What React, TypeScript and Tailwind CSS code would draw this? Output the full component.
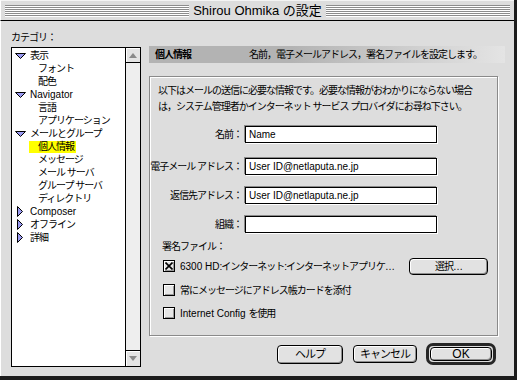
const font = "font-['Liberation_Sans','Noto_Sans_CJK_JP',sans-serif]";

type Item = { t: string; lvl: number; open?: boolean; sel?: boolean; latin?: boolean };

const items: Item[] = [
  { t: "表示", lvl: 0, open: true },
  { t: "フォント", lvl: 1 },
  { t: "配色", lvl: 1 },
  { t: "Navigator", lvl: 0, open: true, latin: true },
  { t: "言語", lvl: 1 },
  { t: "アプリケーション", lvl: 1 },
  { t: "メールとグループ", lvl: 0, open: true },
  { t: "個人情報", lvl: 1, sel: true },
  { t: "メッセージ", lvl: 1 },
  { t: "メール サーバ", lvl: 1 },
  { t: "グループ サーバ", lvl: 1 },
  { t: "ディレクトリ", lvl: 1 },
  { t: "Composer", lvl: 0, open: false, latin: true },
  { t: "オフライン", lvl: 0, open: false },
  { t: "詳細", lvl: 0, open: false },
];

function Stripes() {
  return (
    <div className="flex-1 h-[12px] bg-[repeating-linear-gradient(to_bottom,#8c8c8c_0px,#8c8c8c_1px,#ffffff_1px,#ffffff_2px)]" />
  );
}

function Twisty({ open }: { open: boolean }) {
  return (
    <svg width="11" height="11" viewBox="0 0 11 11" className="shrink-0">
      {open ? (
        <polygon points="0.5,3.5 10.5,3.5 5.5,8.5" fill="#9a9af2" stroke="#000" strokeWidth="1" />
      ) : (
        <polygon points="2.5,0.5 7.5,5.5 2.5,10.5" fill="#9a9af2" stroke="#000" strokeWidth="1" />
      )}
    </svg>
  );
}

function TreeRow({ item }: { item: Item }) {
  if (item.lvl === 0) {
    return (
      <div className="h-[13px] flex items-center pl-[3px] whitespace-nowrap">
        <Twisty open={!!item.open} />
        <span className={`ml-[4px] ${item.latin ? "tracking-normal" : ""}`}>{item.t}</span>
      </div>
    );
  }
  return (
    <div className="h-[13px] flex items-center pl-[17px] whitespace-nowrap">
      <span className={`h-[12px] leading-[12px] pl-[9px] pr-[2px] ${item.sel ? "bg-[#ffff00]" : ""}`}>{item.t}</span>
    </div>
  );
}

function Field({ label, value, mt }: { label: string; value: string; mt: string }) {
  return (
    <div className={`flex items-center ${mt}`}>
      <div className="w-[92px] text-right whitespace-nowrap">{label}</div>
      <div className="ml-[3px] w-[192px] h-[17px] border border-black bg-white shadow-[-1px_-1px_0_#8a8a8a,1px_1px_0_#ffffff] flex items-center pl-[3px] text-[10px] tracking-normal">
        {value}
      </div>
    </div>
  );
}

function CheckBox({ checked }: { checked?: boolean }) {
  return (
    <div className="w-[12px] h-[12px] shrink-0 border border-black bg-[#e6e6e6] shadow-[inset_1px_1px_0_#ffffff,inset_-1px_-1px_0_#999999] flex items-center justify-center">
      {checked && (
        <svg width="8" height="8" viewBox="0 0 8 8">
          <path d="M0.5 0.5 L7.5 7.5 M7.5 0.5 L0.5 7.5" stroke="#000" strokeWidth="1.6" />
        </svg>
      )}
    </div>
  );
}

function Button({ children, className }: { children: React.ReactNode; className: string }) {
  return (
    <div
      className={`rounded-[4px] border border-black bg-[#e2e2e2] shadow-[inset_1px_1px_0_#ffffff,inset_-1px_-1px_0_#8e8e8e] flex items-center justify-center whitespace-nowrap ${className}`}
    >
      {children}
    </div>
  );
}

export default function App() {
  return (
    <div className={`w-[517px] h-[380px] bg-[#dddddd] border-r-[3px] border-b-[4px] border-[#1c1c1c] flex flex-col overflow-hidden text-black text-[10px] tracking-[-1px] ${font}`}>
      <div className="h-[21px] shrink-0 border-b border-black border-l border-l-white border-t border-t-[#f4f4f4] flex items-center pl-[4px] pr-[4px]">
        <Stripes />
        <div className="px-[4px] text-[13px] tracking-normal leading-[16px] whitespace-nowrap">Shirou Ohmika の設定</div>
        <Stripes />
      </div>

      <div className="flex flex-1 border-l border-l-white">
        <div className="pl-[10px] w-[140px] shrink-0 flex flex-col">
          <div className="mt-[11px] h-[12px] leading-[12px] whitespace-nowrap">カテゴリ：</div>
          <div className="mt-[3px] w-[130px] h-[320px] border border-black bg-white flex">
            <div className="flex-1 pt-[1px]">
              {items.map((it) => (
                <TreeRow key={it.t} item={it} />
              ))}
            </div>
            <div className="w-[15px] border-l border-black bg-[#eeeeee] flex flex-col justify-between">
              <div className="h-[15px] border-b border-black bg-[#e4e4e4] shadow-[inset_1px_1px_0_#ffffff] flex items-center justify-center">
                <svg width="8" height="5" viewBox="0 0 8 5"><polygon points="0,5 8,5 4,0" fill="#8a8a8a" /></svg>
              </div>
              <div className="h-[16px] border-t border-black bg-[#e4e4e4] shadow-[inset_1px_1px_0_#ffffff] flex items-center justify-center">
                <svg width="8" height="5" viewBox="0 0 8 5"><polygon points="0,0 8,0 4,5" fill="#8a8a8a" /></svg>
              </div>
            </div>
          </div>
        </div>

        <div className="ml-[8px] flex flex-col">
          <div className="mt-[25px] w-[356px] h-[17px] flex items-center bg-[linear-gradient(to_right,#b3b3b3_0%,#b3b3b3_40%,#e4e4e4_100%)] whitespace-nowrap">
            <span className="ml-[6px] font-bold">個人情報</span>
            <span className="ml-[58px]">名前，電子メールアドレス，署名ファイルを設定します。</span>
          </div>

          <div className="mt-[13px] w-[349px] h-[260px] border border-[#8a8a8a] shadow-[inset_1px_1px_0_#ffffff,1px_1px_0_#ffffff] flex flex-col">
            <div className="pt-[6px] pl-[8px] leading-[16px] whitespace-nowrap">
              <div>以下はメールの送信に必要な情報です。必要な情報がおわかりにならない場合</div>
              <div>は，システム管理者かインターネット サービス プロバイダにお尋ね下さい。</div>
            </div>
            <Field label="名前：" value="Name" mt="mt-[11px]" />
            <Field label="電子メール アドレス：" value="User ID@netlaputa.ne.jp" mt="mt-[15px]" />
            <Field label="返信先アドレス：" value="User ID@netlaputa.ne.jp" mt="mt-[12px]" />
            <Field label="組織：" value="" mt="mt-[12px]" />

            <div className="mt-[8px] pl-[12px] h-[12px] leading-[12px]">署名ファイル：</div>
            <div className="mt-[4px] pl-[13px] h-[18px] flex items-center">
              <CheckBox checked />
              <span className="ml-[5px] w-[224px] whitespace-nowrap overflow-hidden">
                <span className="tracking-normal">6300 HD</span>:インターネット:インターネットアプリケ…
              </span>
              <Button className="ml-[5px] w-[79px] h-[17px]">選択…</Button>
            </div>
            <div className="mt-[9px] pl-[13px] h-[12px] flex items-center">
              <CheckBox />
              <span className="ml-[5px] whitespace-nowrap">常にメッセージにアドレス帳カードを添付</span>
            </div>
            <div className="mt-[11px] pl-[13px] h-[12px] flex items-center">
              <CheckBox />
              <span className="ml-[5px] whitespace-nowrap">
                <span className="tracking-normal">Internet Config </span>を使用
              </span>
            </div>
          </div>

          <div className="mt-[7px] w-[347px] flex items-center justify-end">
            <Button className="w-[66px] h-[19px] text-[11px]">ヘルプ</Button>
            <Button className="ml-[10px] w-[64px] h-[18px] text-[11px]">キャンセル</Button>
            <div className="ml-[9px] w-[70px] h-[22px] rounded-[7px] border-[3px] border-[#262626] flex items-center justify-center">
              <Button className="w-[62px] h-[14px] text-[12px] tracking-normal">OK</Button>
            </div>
          </div>
        </div>
      </div>
    </div>
  );
}
